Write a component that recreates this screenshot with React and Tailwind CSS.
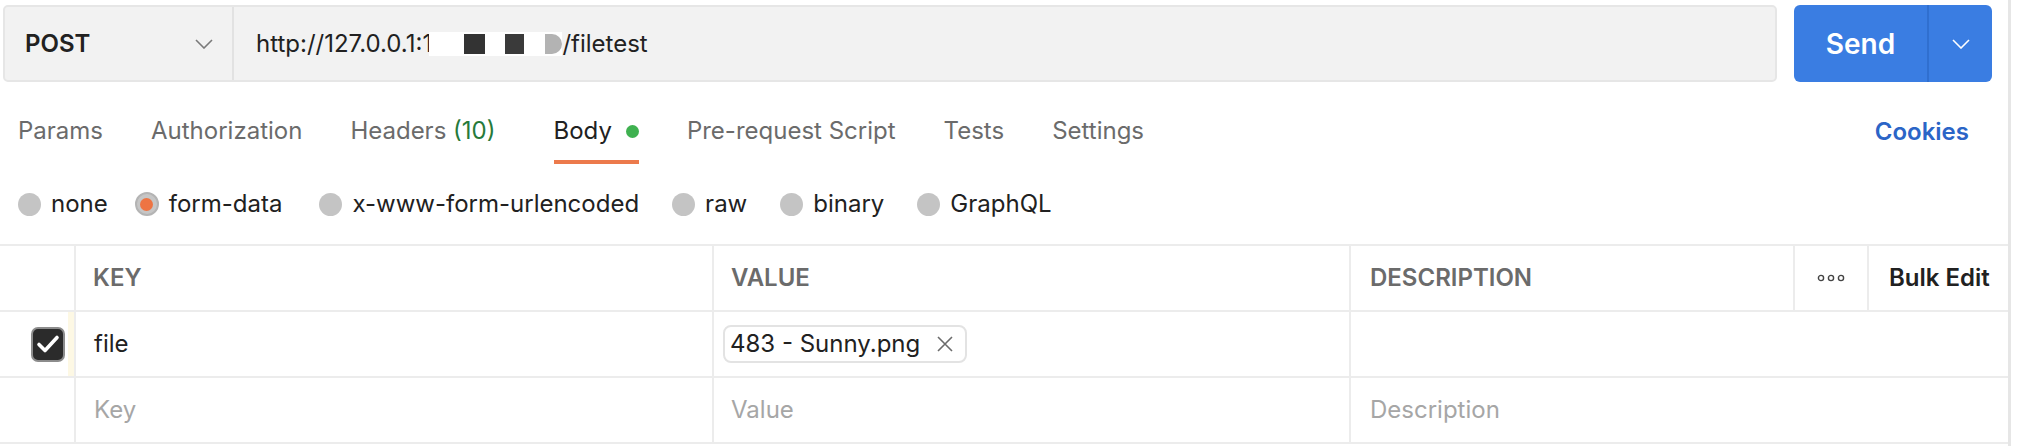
import React from 'react';

function Chevron({ className = '', color = '#7a7a7a' }) {
  return (
    <svg width="18" height="10" viewBox="0 0 18 10" className={className}>
      <path d="M1 1l8 8 8-8" fill="none" stroke={color} strokeWidth="1.6" />
    </svg>
  );
}

function Radio({ label, checked, className = '' }) {
  return (
    <div className={`flex items-center gap-[10px] ${className}`}>
      {checked
        ? <span className="w-[24px] h-[24px] rounded-full bg-[#c6c6c6] border-2 border-[#b4b4b4] flex items-center justify-center">
            <span className="w-[13px] h-[13px] rounded-full bg-[#ee7443]" />
          </span>
        : <span className="w-[23px] h-[23px] rounded-full bg-[#c4c4c4]" />}
      <span className="text-[24px] text-[#212121]">{label}</span>
    </div>
  );
}

function Tab({ children, active, className = '' }) {
  return (
    <div className={`h-[66px] pt-[4px] flex items-center border-b-[4px] ${active ? 'border-[#ec7a4c] text-[#212121]' : 'border-transparent text-[#6b6b6b]'} ${className}`}>
      {children}
    </div>
  );
}

export default function App() {
  return (
    <div className="w-[2011px] h-[446px] bg-white border-r-[3px] border-[#e6e6e6] font-['Inter',sans-serif] text-[24px] overflow-hidden">
      {/* URL bar */}
      <div className="flex items-stretch pt-[5px] pl-[3px] h-[82px]">
        <div className="w-[1774px] flex bg-[#f2f2f2] border-2 border-[#e6e6e6] rounded-[5px]">
          <div className="w-[229px] flex items-center justify-between pl-[20px] pr-[19px] border-r-2 border-[#e2e2e2]">
            <span className="font-semibold text-[#212121]">POST</span>
            <Chevron />
          </div>
          <div className="flex items-center pl-[22px] text-[#212121]">
            <span>http://127.0.0.1:</span>
            <span className="inline-block w-[7px] overflow-hidden">1</span>
            <span className="inline-flex items-center h-[24px] bg-white">
              <span className="w-[35px]" />
              <span className="w-[21px] h-[20px] bg-[#333]" />
              <span className="w-[20px]" />
              <span className="w-[19px] h-[20px] bg-[#3a3a3a]" />
              <span className="w-[21px]" />
              <span className="w-[17px] h-[20px] bg-[#b3b3b3] rounded-r-full" />
            </span>
            <span>/filetest</span>
          </div>
        </div>
        <div className="ml-[17px] w-[198px] flex bg-[#3a7de2] rounded-[6px] text-white">
          <div className="w-[135px] flex items-center justify-center font-semibold text-[28px] border-r-2 border-[#306fcf]">Send</div>
          <div className="flex-1 flex items-center justify-center">
            <Chevron color="#ffffff" />
          </div>
        </div>
      </div>

      {/* Tabs */}
      <div className="mt-[16px] flex items-stretch pl-[18px] pr-[39px]">
        <div className="flex gap-[48px]">
          <Tab>Params</Tab>
          <Tab>Authorization</Tab>
          <Tab>Headers&nbsp;<span className="text-[#267a3a]">(10)</span></Tab>
          <Tab active className="ml-[10px]">
            Body
            <span className="ml-[14px] w-[13px] h-[13px] rounded-full bg-[#3fb150]" />
          </Tab>
          <Tab>Pre-request Script</Tab>
          <Tab>Tests</Tab>
          <Tab>Settings</Tab>
        </div>
        <div className="ml-auto flex items-center pt-[2px] font-semibold text-[#2b65c7]">Cookies</div>
      </div>

      {/* Body types */}
      <div className="h-[80px] flex items-center gap-[33px] pl-[18px]">
        <Radio label="none" />
        <Radio label="form-data" checked className="-ml-[6px] gap-[8px]" />
        <Radio label="x-www-form-urlencoded" className="ml-[4px]" />
        <Radio label="raw" />
        <Radio label="binary" />
        <Radio label="GraphQL" />
      </div>

      {/* Table */}
      <div className="border-t-2 border-[#ececec]">
        <div className="flex h-[66px] border-b-2 border-[#ececec] font-semibold text-[#6b6b6b]">
          <div className="w-[76px] border-r-2 border-[#ececec]" />
          <div className="w-[638px] border-r-2 border-[#ececec] flex items-center pl-[17px]">KEY</div>
          <div className="w-[637px] border-r-2 border-[#ececec] flex items-center pl-[17px]">VALUE</div>
          <div className="w-[444px] border-r-2 border-[#ececec] flex items-center pl-[19px]">DESCRIPTION</div>
          <div className="w-[74px] border-r-2 border-[#ececec] flex items-center justify-center">
            <svg width="28" height="8" viewBox="0 0 28 8">
              <circle cx="4" cy="4" r="2.6" fill="none" stroke="#444" strokeWidth="1.4" />
              <circle cx="14" cy="4" r="2.6" fill="none" stroke="#444" strokeWidth="1.4" />
              <circle cx="24" cy="4" r="2.6" fill="none" stroke="#444" strokeWidth="1.4" />
            </svg>
          </div>
          <div className="flex-1 flex items-center pl-[20px] text-[#212121]">Bulk Edit</div>
        </div>

        <div className="flex h-[66px] border-b-2 border-[#ececec] text-[#212121]">
          <div className="w-[76px] border-r-2 border-[#ececec] flex">
            <div className="flex-1 flex items-center justify-end pr-[3px]">
              <span className="w-[34px] h-[35px] rounded-[7px] bg-[#2b2b2b] border-2 border-[#8c8c8c] flex items-center justify-center">
                <svg width="24" height="20" viewBox="0 0 24 20">
                  <path d="M3 10.5l6 6 12-13" fill="none" stroke="#fff" strokeWidth="3.6" strokeLinecap="round" strokeLinejoin="round" />
                </svg>
              </span>
            </div>
            <div className="w-[6px] bg-[#fdf8e4]" />
          </div>
          <div className="w-[638px] border-r-2 border-[#ececec] flex items-center pl-[18px]">file</div>
          <div className="w-[637px] border-r-2 border-[#ececec] flex items-center pl-[9px]">
            <div className="h-[38px] flex items-center gap-[16px] pl-[5px] pr-[11px] border-2 border-[#e3e3e3] rounded-[8px]">
              <span>483 - Sunny.png</span>
              <svg width="18" height="18" viewBox="0 0 18 18">
                <path d="M2 2l14 14M16 2L2 16" stroke="#6b6b6b" strokeWidth="1.6" />
              </svg>
            </div>
          </div>
          <div className="flex-1" />
        </div>

        <div className="flex h-[66px] border-b-2 border-[#ececec] text-[#a6a6a6]">
          <div className="w-[76px] border-r-2 border-[#ececec]" />
          <div className="w-[638px] border-r-2 border-[#ececec] flex items-center pl-[18px]">Key</div>
          <div className="w-[637px] border-r-2 border-[#ececec] flex items-center pl-[17px]">Value</div>
          <div className="flex-1 flex items-center pl-[19px]">Description</div>
        </div>
      </div>
    </div>
  );
}
